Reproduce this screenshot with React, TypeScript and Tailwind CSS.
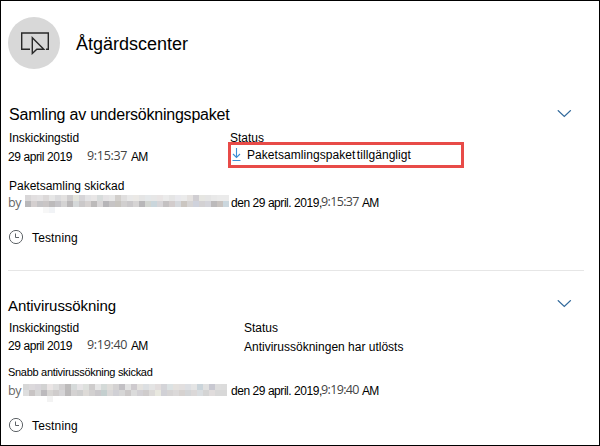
import React from "react";

const sans = "font-['Liberation_Sans',Arial,sans-serif] text-black";
const ui = "font-['Open_Sans','Noto_Sans',sans-serif]";

function Chevron() {
  return (
    <svg className="h-[9px] w-[15px] shrink-0" viewBox="0 0 15 9" fill="none">
      <path d="M.8 .3 7.3 6.5 13.8 .3" stroke="#31699b" strokeWidth="1.25" />
    </svg>
  );
}

function Clock() {
  return (
    <svg className="h-[15px] w-[15px] shrink-0" viewBox="0 0 15 15" fill="none" stroke="#5f6468">
      <circle cx="8" cy="7" r="6.6" strokeWidth="1" />
      <path d="M7.5 3.5V7.5H11" strokeWidth="1" />
    </svg>
  );
}

function Download() {
  return (
    <svg className="h-[13px] w-[9px] shrink-0" viewBox="0 0 9 13" fill="none" stroke="#3d8fd6" strokeWidth="1.1">
      <path d="M4.5 0V9.5M1 6 4.5 9.5 8 6M.5 12.5H8.5" />
    </svg>
  );
}

const mosaicA = [
  "d9d7d8 e2dfe0 e4e2e3 dcd9d9 e6e6e6 dbdbdd e3e1e0 cfcdce e4e4dc d6d5d8 e3e3e5 e8e6e6 d8dcdc e5e3e5 e7e7e7 d2cfcc e0dfdf e9e9e9 ebe9e6 e5e5e5 e5e8ea e7e7e7 e9e5e5 ebebeb e5e5e5 e9e9ed ebebeb e5e2e0 d0ced2 e6e6e2 e5e5e5 e9e9e9 ebebeb ebebeb",
  "b9b8ba d4cfcf c5c4c6 c9c5c5 bcbabb c4c3c7 d4d3d3 b9b7b8 d5d8d9 cac8c9 d5d1d0 bcbaba d8d6d7 b6b5b8 c6c4c5 c7c4bf d1cfcf cac8ca d6d4d4 b8b7b9 d2d5d1 cad6dc d7d5d8 c4c1c2 d2cccc d5d8dc cbc6c1 d6d4d4 cfd2dc d3d1d3 d4d4da bcbabb c8c3c0 cbd7de",
  "ffffff ffffff ffffff f7f7f7 f1f3f6",
];
const mosaicB = [
  "d7d7d7 dcd9dc d8d5da d2d2d2 eae5e5 dedede d2d0d1 bdbbbb d6dada e6e4e6 dde0dd cecccc e6e6e6 d4dad8 dfddda d4d2d2 c2c0c4 e2e2e2 cecace e4e2df dcdfe2 e4e4e4 e2dddd d4d4d8 dce2e3 e4e1de e2dfdf dddfe3 e4e4e4 cad4da e0e0e0 c8c8d1 dddddd dcdcdc",
  "dedede c8c4c4 d7d7d7 bcbabd d7d5d3 cfcccc d5d4d6 bbb9ba d4d2d2 cecece dddad7 d2d0d0 cac8cb c4cfcf dad8d8 d0d0d5 d6d6d6 cbc8c8 dbdbdb d2d0d4 cfcccc dcdad8 e8e8df d1d1d6 d6d4d4 dbd9d9 d6d2d0 d3d5d7 dbd8d8 d9dde0 d4d4d4 e0dcdc d8d8d8 d8d8d8",
  "ffffff ffffff ffffff ffffff f3f3f3",
];

function Mosaic({ rows }: { rows: string[] }) {
  return (
    <div className="h-[18px] w-[204px] shrink-0">
      {rows.map((row, r) => (
        <div key={r} className="flex h-1.5">
          {row.split(" ").map((c, i) => (
            <span key={i} className="h-1.5 w-1.5" style={{ backgroundColor: "#" + c }} />
          ))}
        </div>
      ))}
    </div>
  );
}

function DateTime({ time }: { time: string }) {
  return (
    <div className="flex h-4 items-start whitespace-nowrap text-[12px] leading-4">
      <span className="w-[79px] tracking-[-0.42px]">29 april 2019</span>
      <span className={`${ui} -mt-px w-11 text-[12.5px] tracking-[-0.3px] text-[#444]`}>{time}</span>
      <span className="tracking-[-0.8px]">AM</span>
    </div>
  );
}

function SentBy({ time, rows, pad, gap, lift }: { time: string; rows: string[]; pad: string; gap: string; lift: string }) {
  return (
    <div className="flex h-4 items-start whitespace-nowrap text-[12px] leading-4">
      <span className={`${ui} shrink-0 text-[12.5px] tracking-[-0.4px] text-[#666] ${pad} ${lift}`}>by</span>
      <Mosaic rows={rows} />
      <div className={`flex ${gap} ${lift}`}>
        <span className="w-[90px] shrink-0 tracking-[-0.45px]">den 29 april. 2019,</span>
        <span className={`${ui} -mt-px w-[41px] shrink-0 text-[12.5px] tracking-[-0.65px] text-[#444]`}>{time}</span>
        <span className="tracking-[-0.8px]">AM</span>
      </div>
    </div>
  );
}

function Comment() {
  return (
    <div className="flex h-4 items-start text-[12px] leading-4">
      <Clock />
      <span className="ml-[9px] tracking-[0.15px]">Testning</span>
    </div>
  );
}

export default function App() {
  return (
    <main className={`${sans} h-[446px] w-[600px] overflow-hidden border border-black bg-white pl-[7px] pr-[15px]`}>
      <header className="flex h-[101px] items-start pt-4">
        <div className="flex h-[52px] w-[52px] items-center justify-center rounded-full bg-[#d8d8d8]">
          <svg className="ml-0.5 h-6 w-7" viewBox="0 0 28 24" fill="none" stroke="#292929" strokeWidth="1.4">
            <path d="M9 18.3H.7V2H27.3V18.3H25" />
            <path d="M11.3 6.8V22.5L15.8 18.3H22.8Z" />
          </svg>
        </div>
        <h1 className="ml-4 mt-[15px] text-[18px] leading-6">Åtgärdscenter</h1>
      </header>

      <section className="h-[168px]">
        <div className="flex h-7 items-start justify-between pr-3">
          <h2 className="ml-px whitespace-nowrap pt-px text-[16px] leading-6 tracking-[-0.22px]">
            Samling av undersökningspaket
          </h2>
          <div className="pt-2"><Chevron /></div>
        </div>
        <div className="flex h-[47px]">
          <div className="w-[220px] shrink-0 text-[12px] leading-4">
            <div className="ml-px h-[19px] tracking-[-0.1px]">Inskickingstid</div>
            <DateTime time="9:15:37" />
          </div>
          <div className="text-[12px] leading-4">
            <div className="ml-0.5 h-3">Status</div>
            <div className="flex h-[26px] w-[236px] items-start border-[3px] border-[#e84b48] pl-px pt-[3px]">
              <Download />
              <span className="-mt-px ml-1.5 whitespace-nowrap tracking-[0.06px] [word-spacing:-2px]">
                Paketsamlingspaket tillgängligt
              </span>
            </div>
          </div>
        </div>
        <div className="ml-px h-[18px] whitespace-nowrap pt-px text-[12px] leading-4">Paketsamling skickad</div>
        <div className="h-[35px]">
          <SentBy time="9:15:37" rows={mosaicA} pad="w-[17px]" gap="ml-0.5" lift="mt-0" />
        </div>
        <Comment />
      </section>

      <hr className="w-[576px] border-[#e6e6e6]" />

      <section>
        <div className="flex h-[49px] items-start justify-between pr-3 pt-[22px]">
          <h2 className="whitespace-nowrap pt-px text-[15px] leading-6 tracking-[-0.08px]">Antivirussökning</h2>
          <div className="pt-[7px]"><Chevron /></div>
        </div>
        <div className="flex h-[45px] text-[12px] leading-4">
          <div className="w-[236px] shrink-0">
            <div className="ml-px h-[18px] tracking-[-0.1px]">Inskickingstid</div>
            <DateTime time="9:19:40" />
          </div>
          <div className="whitespace-nowrap">
            <div className="h-[19px]">Status</div>
            <div>Antivirussökningen har utlösts</div>
          </div>
        </div>
        <div className="-mt-px h-5 whitespace-nowrap text-[11px] leading-4 tracking-[-0.3px]">
          Snabb antivirussökning skickad
        </div>
        <div className="h-[34px]">
          <SentBy time="9:19:40" rows={mosaicB} pad="w-[15px]" gap="ml-1" lift="-mt-px" />
        </div>
        <Comment />
      </section>
    </main>
  );
}
